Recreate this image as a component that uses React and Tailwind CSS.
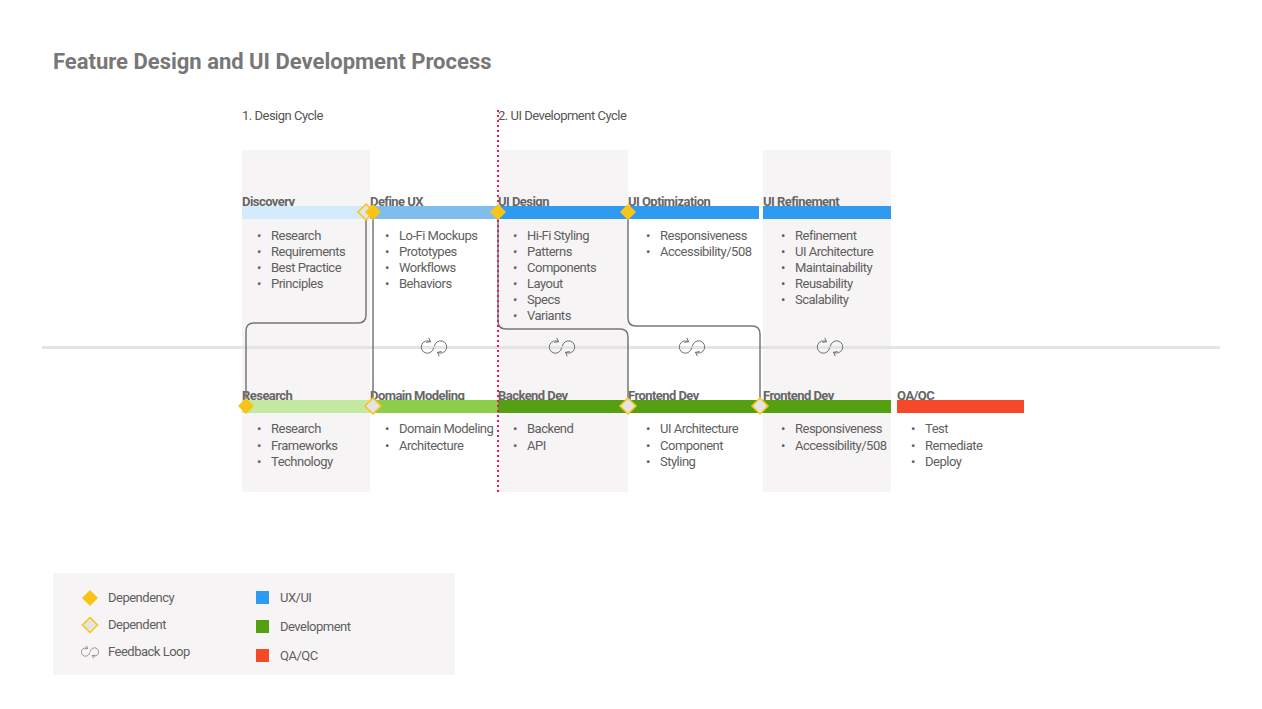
import React from 'react';

const YELLOW = '#f9c413';

// columns of the process, left to right
const columns = [
  {
    w: 'w-[128px]',
    shade: 'bg-[#f6f4f5]',
    pl: 'pl-[15px]',
    top: { label: 'Discovery', bar: 'bg-[#d4ebfb]', barMr: 'mr-[4px]', items: ['Research', 'Requirements', 'Best Practice', 'Principles'] },
    bottom: { label: 'Research', bar: 'bg-[#c4e9a0]', items: ['Research', 'Frameworks', 'Technology'] },
  },
  {
    w: 'w-[128px]',
    shade: '',
    pl: 'pl-[15px]',
    top: { label: 'Define UX', bar: 'bg-[#7fbdec]', barMr: '', items: ['Lo-Fi Mockups', 'Prototypes', 'Workflows', 'Behaviors'] },
    bottom: { label: 'Domain Modeling', bar: 'bg-[#8cce4a]', items: ['Domain Modeling', 'Architecture'] },
  },
  {
    w: 'w-[130px]',
    shade: 'bg-[#f6f4f5]',
    pl: 'pl-[15px]',
    top: { label: 'UI Design', bar: 'bg-[#2e9bf0]', barMr: '', items: ['Hi-Fi Styling', 'Patterns', 'Components', 'Layout', 'Specs', 'Variants'] },
    bottom: { label: 'Backend Dev', bar: 'bg-[#559f13]', items: ['Backend', 'API'] },
  },
  {
    w: 'w-[135px]',
    shade: '',
    pl: 'pl-[18px]',
    top: { label: 'UI Optimization', bar: 'bg-[#2e9bf0]', barMr: 'mr-[4px]', items: ['Responsiveness', 'Accessibility/508'] },
    bottom: { label: 'Frontend Dev', bar: 'bg-[#559f13]', items: ['UI Architecture', 'Component', 'Styling'] },
  },
  {
    w: 'w-[128px]',
    shade: 'bg-[#f6f4f5]',
    pl: 'pl-[18px]',
    top: { label: 'UI Refinement', bar: 'bg-[#2e9bf0]', barMr: '', items: ['Refinement', 'UI Architecture', 'Maintainability', 'Reusability', 'Scalability'] },
    bottom: { label: 'Frontend Dev', bar: 'bg-[#559f13]', items: ['Responsiveness', 'Accessibility/508'] },
  },
  {
    w: 'w-[127px] ml-[6px]',
    shade: '',
    pl: 'pl-[14px]',
    top: null,
    bottom: { label: 'QA/QC', bar: 'bg-[#f44a2a]', items: ['Test', 'Remediate', 'Deploy'] },
  },
];

const BulletList = ({ items, pl, leading }) => (
  <ul className={`${pl} text-[13px] tracking-[-0.5px] ${leading} text-[#5f5f5f]`}>
    {items.map((item) => (
      <li key={item} className="flex whitespace-nowrap">
        <span className="w-[14px] flex-none">•</span>
        <span>{item}</span>
      </li>
    ))}
  </ul>
);

const Stage = ({ label, bar, barMr = '' }) => (
  <>
    <div className="mb-[-3px] whitespace-nowrap text-[13px] font-bold leading-[14px] tracking-[-0.55px] text-[#666]">{label}</div>
    <div className={`relative h-[13px] ${bar} ${barMr}`}></div>
  </>
);

const Column = ({ col }) => (
  <div className={`flex h-[342px] flex-none flex-col ${col.w} ${col.shade}`}>
    <div className="h-[239px] flex-none pt-[45px]">
      {col.top && (
        <>
          <Stage label={col.top.label} bar={col.top.bar} barMr={col.top.barMr} />
          <div className="mt-[9px]">
            <BulletList items={col.top.items} pl={col.pl} leading="leading-[16px]" />
          </div>
        </>
      )}
    </div>
    <Stage label={col.bottom.label} bar={col.bottom.bar} />
    <div className="mt-[8px]">
      <BulletList items={col.bottom.items} pl={col.pl} leading="leading-[16.5px]" />
    </div>
  </div>
);

const Diamond = ({ x, y, hollow, s = 8 }) => (
  <polygon
    points={`${x},${y - s} ${x + s},${y} ${x},${y + s} ${x - s},${y}`}
    fill={hollow ? '#e4e4e4' : YELLOW}
    stroke={hollow ? YELLOW : 'none'}
    strokeWidth={hollow ? 1.5 : 0}
  />
);

// two open circles with arrows, drawn around 0,0
const LoopHalf = () => (
  <g>
    <path d="M-3.5 -5.4 A6.2 6.2 0 1 0 -0.4 1" />
    <path d="M-7.2 -4.6 L-3.5 -5.4 L-5.1 -8.8" />
  </g>
);

const Loop = ({ x, y, scale = 1 }) => (
  <g transform={`translate(${x} ${y}) scale(${scale})`} fill="none" stroke="#6f6f6f" strokeWidth={1} strokeLinecap="round" strokeLinejoin="round">
    <LoopHalf />
    <g transform="rotate(180)">
      <LoopHalf />
    </g>
  </g>
);

const Overlay = () => (
  <svg className="pointer-events-none absolute left-0 top-0" width="1262" height="709" viewBox="0 0 1262 709">
    <rect x="42" y="346" width="1178" height="3" fill="#e4e4e4" />
    <g fill="none" stroke="#777" strokeWidth="1.5">
      <path d="M366 219 V315 Q366 323 358 323 H254 Q246 323 246 331 V400" />
      <path d="M373 219 V400" />
      <path d="M498 219 V321 Q498 329 506 329 H620 Q628 329 628 337 V400" />
      <path d="M628 219 V318 Q628 326 636 326 H752 Q760 326 760 334 V400" />
    </g>
    <line x1="498" y1="110" x2="498" y2="492" stroke="#e8175d" strokeWidth="2" strokeDasharray="2 3" />
    <Loop x={434} y={347} />
    <Loop x={562} y={347} />
    <Loop x={692} y={347} />
    <Loop x={830} y={347} />
    <Diamond x={366} y={212} hollow />
    <Diamond x={373} y={212} />
    <Diamond x={498} y={212} />
    <Diamond x={628} y={212} />
    <Diamond x={246} y={406} />
    <Diamond x={373} y={406} hollow />
    <Diamond x={628} y={406} hollow />
    <Diamond x={760} y={406} hollow />
  </svg>
);

const LegendIcon = ({ children }) => (
  <svg width="18" height="18" viewBox="-9 -9 18 18" className="flex-none">
    {children}
  </svg>
);

const Legend = () => (
  <div className="ml-[53px] mt-[81px] flex h-[102px] w-[402px] bg-[#f6f4f5] text-[13px] tracking-[-0.5px] text-[#5f5f5f]">
    <div className="w-[203px] pl-[28px] pt-[11px]">
      <div className="flex h-[27px] items-center gap-[9px]">
        <LegendIcon><Diamond x={0} y={0} s={8} /></LegendIcon>
        <span>Dependency</span>
      </div>
      <div className="flex h-[27px] items-center gap-[9px]">
        <LegendIcon><Diamond x={0} y={0} s={7.5} hollow /></LegendIcon>
        <span>Dependent</span>
      </div>
      <div className="flex h-[27px] items-center gap-[9px]">
        <LegendIcon><Loop x={0} y={0} scale={0.68} /></LegendIcon>
        <span>Feedback Loop</span>
      </div>
    </div>
    <div className="pt-[10px]">
      <div className="flex h-[29px] items-center gap-[11px]">
        <span className="h-[13px] w-[13px] bg-[#2e9bf0]"></span>
        <span>UX/UI</span>
      </div>
      <div className="flex h-[29px] items-center gap-[11px]">
        <span className="h-[13px] w-[13px] bg-[#559f13]"></span>
        <span>Development</span>
      </div>
      <div className="flex h-[29px] items-center gap-[11px]">
        <span className="h-[13px] w-[13px] bg-[#f44a2a]"></span>
        <span>QA/QC</span>
      </div>
    </div>
  </div>
);

export default function App() {
  return (
    <div className="relative h-[709px] w-[1262px] overflow-hidden bg-white font-[Roboto,sans-serif]">
      <h1 className="pl-[53px] pt-[49px] text-[22px] font-bold leading-[26px] text-[#777]">
        Feature Design and UI Development Process
      </h1>

      <div className="ml-[242px] mt-[33px]">
        <div className="flex text-[13px] leading-[16px] tracking-[-0.5px] text-[#555]">
          <div className="w-[256px]">1. Design Cycle</div>
          <div>2. UI Development Cycle</div>
        </div>
        <div className="mt-[26px] flex">
          {columns.map((col, i) => (
            <Column key={i} col={col} />
          ))}
        </div>
      </div>

      <Legend />
      <Overlay />
    </div>
  );
}
